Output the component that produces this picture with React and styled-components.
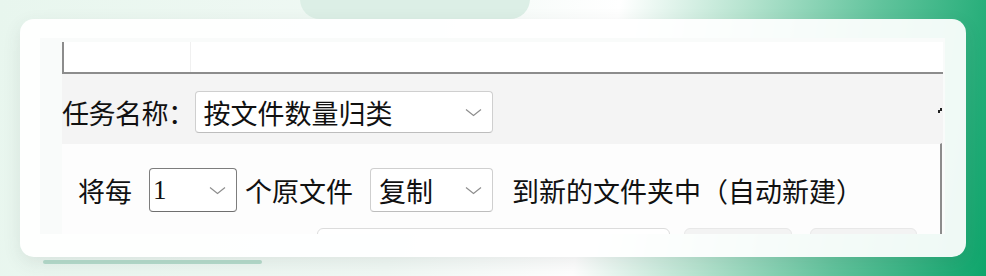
import React from 'react';
import styled, { createGlobalStyle } from 'styled-components';

const Global = createGlobalStyle`
  html, body { margin: 0; padding: 0; }
  body {
    width: 986px;
    height: 276px;
    overflow: hidden;
    font-family: "Noto Sans CJK SC", "Noto Sans", sans-serif;
    color: #111111;
  }
`;

const Stage = styled.div`
  position: relative;
  width: 986px;
  height: 276px;
  box-sizing: border-box;
  padding: 19px 20px;
  overflow: hidden;
  background: linear-gradient(100deg, #e8f6ee 0%, #f1f9f5 42%, #ffffff 60%, #b7e4d0 72%, #62c49d 85%, #0ea56b 100%);
`;

const TopBlob = styled.div`
  position: absolute;
  left: 300px;
  top: -22px;
  width: 230px;
  height: 41px;
  border-radius: 20px;
  background: #dcefe6;
`;

const BottomBar = styled.div`
  position: absolute;
  left: 43px;
  top: 260px;
  width: 219px;
  height: 4px;
  border-radius: 2px;
  background: #b5dccc;
`;

const Card = styled.div`
  position: relative;
  z-index: 1;
  height: 238px;
  box-sizing: border-box;
  padding: 19px 21px 23px 20px;
  border-radius: 14px;
  background: rgba(255, 255, 255, 0.93);
  box-shadow: 0 6px 18px rgba(60, 70, 70, 0.1);
`;

const Panel = styled.div`
  height: 196px;
  overflow: hidden;
  box-sizing: border-box;
  padding: 0 2px 0 22px;
  background: #f9fbfa;
  display: flex;
  flex-direction: column;
  font-size: 27px;
  letter-spacing: 0;
  line-height: 1;
`;

const TableStrip = styled.div`
  margin-top: 4px;
  height: 30px;
  flex: none;
  display: flex;
  background: #ffffff;
  border-left: 2px solid #8c8c8c;
  border-bottom: 2px solid #8c8c8c;
`;

const TableCell = styled.div`
  width: ${(p) => p.$w || 'auto'};
  flex: ${(p) => (p.$w ? 'none' : '1')};
  border-right: ${(p) => (p.$w ? '1px solid #f0f0f0' : 'none')};
`;

const TaskRow = styled.div`
  height: 69px;
  flex: none;
  box-sizing: border-box;
  padding-top: 7px;
  display: flex;
  align-items: center;
  background: #f4f4f4;
`;

const Label = styled.span`
  letter-spacing: -0.5px;
  white-space: nowrap;
`;

const Select = styled.div`
  width: ${(p) => p.$w}px;
  height: ${(p) => p.$h}px;
  flex: none;
  box-sizing: border-box;
  display: flex;
  align-items: center;
  justify-content: space-between;
  padding: 0 10px 0 ${(p) => p.$pl}px;
  margin: 0 ${(p) => p.$mr || 0}px 0 ${(p) => p.$ml || 0}px;
  background: #ffffff;
  border: 1px solid ${(p) => (p.$dark ? '#7d7d7d' : '#cfcfcf')};
  border-bottom-color: ${(p) => (p.$dark ? '#6f6f6f' : '#bdbdbd')};
  border-radius: 4px;
  white-space: nowrap;
`;

const Digit = styled.span`
  font-family: "Liberation Serif", serif;
  font-size: 27px;
`;

const CornerMark = styled.span`
  margin-left: auto;
  margin-right: 1px;
  margin-top: -3px;
  display: flex;
`;

const OptionsRow = styled.div`
  flex: 1;
  margin-right: 1px;
  box-sizing: border-box;
  padding: 24px 0 0 16px;
  background: #fdfdfd;
  border-right: 2px solid #8c8c8c;
  border-top: 1px solid #f4f4f4;
  display: flex;
  flex-direction: column;
`;

const MainLine = styled.div`
  display: flex;
  align-items: center;
  height: 44px;
  white-space: nowrap;
`;

const Text = styled.span`
  margin-right: ${(p) => p.$mr || 0}px;
`;

const BottomLine = styled.div`
  display: flex;
  margin: 16px 0 0 239px;
`;

const Field = styled.div`
  width: ${(p) => p.$w}px;
  height: 20px;
  flex: none;
  box-sizing: border-box;
  margin-right: ${(p) => p.$mr || 0}px;
  border: 1px solid ${(p) => (p.$muted ? '#e8e8e8' : '#dcdcdc')};
  border-radius: 6px;
  background: ${(p) => (p.$muted ? '#f3f3f3' : '#ffffff')};
`;

const Chevron = () => (
  <svg width="17" height="9" viewBox="0 0 17 9">
    <polyline points="1,1.5 8.5,7.5 16,1.5" fill="none" stroke="#8d8d8d" strokeWidth="1.2" />
  </svg>
);

export default function App() {
  return (
    <>
      <Global />
      <Stage>
        <TopBlob />
        <Card>
          <Panel>
            <TableStrip>
              <TableCell $w="126px" />
              <TableCell />
            </TableStrip>
            <TaskRow>
              <Label>任务名称：</Label>
              <Select $w={298} $h={42} $pl={8}>
                <span>按文件数量归类</span>
                <Chevron />
              </Select>
              <CornerMark>
                <svg width="4" height="5" viewBox="0 0 4 5">
                  <path d="M0 5 L0 2 L2 2 L2 0 L4 0 L4 3 L2 3 L2 5 Z" fill="#222" />
                </svg>
              </CornerMark>
            </TaskRow>
            <OptionsRow>
              <MainLine>
                <Text $mr={17}>将每</Text>
                <Select $w={88} $h={44} $pl={3} $dark $mr={8}>
                  <Digit>1</Digit>
                  <Chevron />
                </Select>
                <Text $mr={17}>个原文件</Text>
                <Select $w={123} $h={44} $pl={8} $mr={19}>
                  <span>复制</span>
                  <Chevron />
                </Select>
                <Text>到新的文件夹中（自动新建）</Text>
              </MainLine>
              <BottomLine>
                <Field $w={353} $mr={14} />
                <Field $w={108} $mr={18} $muted />
                <Field $w={107} $muted />
              </BottomLine>
            </OptionsRow>
          </Panel>
        </Card>
        <BottomBar />
      </Stage>
    </>
  );
}
